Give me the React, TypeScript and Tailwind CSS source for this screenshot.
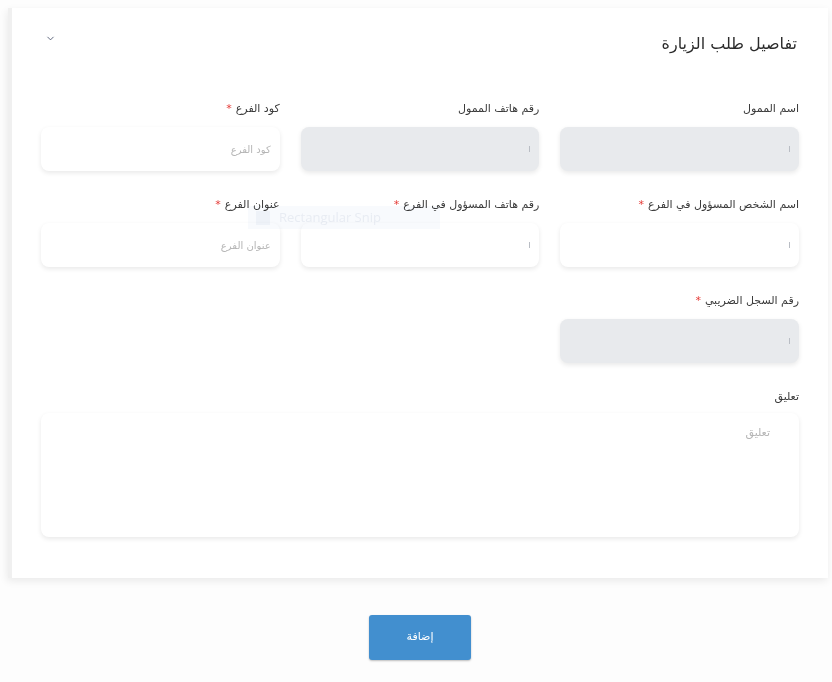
import { ChevronDown } from 'lucide-react';

interface Field {
  label: string;
  required?: boolean;
  disabled?: boolean;
  placeholder?: string;
}

const rows: Field[][] = [
  [
    { label: 'اسم الممول', disabled: true },
    { label: 'رقم هاتف الممول', disabled: true },
    { label: 'كود الفرع', required: true, placeholder: 'كود الفرع' },
  ],
  [
    { label: 'اسم الشخص المسؤول في الفرع', required: true },
    { label: 'رقم هاتف المسؤول في الفرع', required: true },
    { label: 'عنوان الفرع', required: true, placeholder: 'عنوان الفرع' },
  ],
  [{ label: 'رقم السجل الضريبي', required: true, disabled: true }],
];

function FieldBox({ field }: { field: Field }) {
  return (
    <div className="flex flex-col">
      <label className="h-4 mb-[10px] text-[11px] leading-4 text-[#3a3a3a]">
        {field.label}
        {field.required && <span className="text-[#e53935] mr-1">*</span>}
      </label>
      <div
        className={`h-[44px] rounded-lg flex items-center px-[9px] text-[10px] text-[#b5b5b5] shadow-[0_2px_5px_rgba(0,0,0,0.09)] ${
          field.disabled ? 'bg-[#e8eaed]' : 'bg-white'
        }`}
      >
        {field.placeholder ?? <span className="w-px h-[6px] bg-[#b9bdc4]" />}
      </div>
    </div>
  );
}

export default function App() {
  return (
    <div
      className="min-h-[682px] bg-[#fdfdfd] pt-2 pl-2 relative"
      style={{ fontFamily: '"DejaVu Sans", "Noto Sans", sans-serif' }}
    >
      <div className="bg-white w-[820px] h-[570px] px-[29px] pt-[24px] shadow-[-1px_3px_8px_rgba(0,0,0,0.08)] border-l-4 border-[#f0f0f0]">
        <div className="flex items-center justify-between h-6" dir="rtl">
          <h2 className="text-[16px] text-[#2b2b2b] pr-[2px]">تفاصيل طلب الزيارة</h2>
          <ChevronDown size={11} strokeWidth={1.75} className="text-[#3c4660] ml-[4px] -mt-[11px]" />
        </div>

        <div dir="rtl" className="mt-[45px] flex flex-col gap-[26px]">
          {rows.map((row, i) => (
            <div key={i} className="grid grid-cols-3 gap-x-[21px]">
              {row.map((f) => (
                <FieldBox key={f.label} field={f} />
              ))}
            </div>
          ))}

          <div className="flex flex-col">
            <label className="h-4 mb-2 text-[11px] leading-4 text-[#3a3a3a]">تعليق</label>
            <div className="h-[124px] rounded-lg bg-white shadow-[0_2px_5px_rgba(0,0,0,0.09)] pt-[12px] pr-[29px] text-[11px] text-[#b5b5b5]">
              تعليق
            </div>
          </div>
        </div>
      </div>

      <div className="flex justify-center mt-[37px] w-[832px] pr-2">
        <button
          type="button"
          className="w-[102px] h-[45px] rounded-[3px] bg-[#428fcf] text-white text-[11px] shadow-[0_1px_2px_rgba(0,0,0,0.25)]"
        >
          إضافة
        </button>
      </div>

      <div className="pointer-events-none mix-blend-multiply absolute left-[248px] top-[206px] w-[192px] h-[23px] bg-[#f8fafd] flex items-center gap-[9px] px-[8px] text-[13px] text-[#e8ecf3]">
        <span className="w-[14px] h-[14px] bg-[#eef2f8]" />
        <span style={{ fontFamily: '"Open Sans", sans-serif' }}>Rectangular Snip</span>
      </div>
    </div>
  );
}
